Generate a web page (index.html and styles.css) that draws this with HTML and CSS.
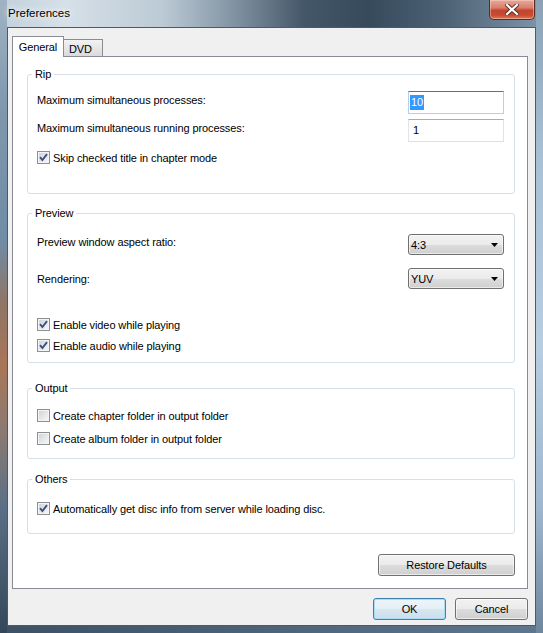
FILE: index.html
```html
<!DOCTYPE html>
<html lang="en">
<head>
<meta charset="utf-8">
<title>Preferences</title>
<link rel="stylesheet" href="styles.css">
</head>
<body>
<div class="window">
  <div class="titlebar">
    <span class="title">Preferences</span>
    <button class="close" aria-label="Close">
      <svg width="14" height="11" viewBox="0 0 14 11">
        <path d="M2 1 L12 10 M12 1 L2 10" stroke="#5a2a20" stroke-width="4" stroke-linecap="square"/>
        <path d="M2 1 L12 10 M12 1 L2 10" stroke="#ffffff" stroke-width="2.2" stroke-linecap="square"/>
      </svg>
    </button>
  </div>
  <div class="client">
    <div class="tabs">
      <div class="tab tab-active">General</div>
      <div class="tab tab-inactive">DVD</div>
    </div>
    <div class="panel">
      <fieldset class="group">
        <legend>Rip</legend>
        <div class="group-body rip-body">
          <div class="field-row">
            <span class="field-label">Maximum simultaneous processes:</span>
            <div class="textbox textbox-focused"><span class="selection">10</span></div>
          </div>
          <div class="field-row field-row-2">
            <span class="field-label">Maximum simultaneous running processes:</span>
            <div class="textbox">1</div>
          </div>
          <div class="check-row rip-check">
            <span class="checkbox checked"><svg width="9" height="9" viewBox="0 0 9 9"><path d="M1 4.2 L3.4 7 L8 1.2" fill="none" stroke="#3c4f82" stroke-width="1.9"/></svg></span>
            <span>Skip checked title in chapter mode</span>
          </div>
        </div>
      </fieldset>

      <fieldset class="group group-preview">
        <legend>Preview</legend>
        <div class="group-body preview-body">
          <div class="field-row combo-row">
            <span class="field-label">Preview window aspect ratio:</span>
            <div class="combo"><span>4:3</span><svg width="7" height="4" viewBox="0 0 7 4"><path d="M0 0 H7 L3.5 4 Z" fill="#000"/></svg></div>
          </div>
          <div class="field-row combo-row combo-row-2">
            <span class="field-label label-low">Rendering:</span>
            <div class="combo"><span>YUV</span><svg width="7" height="4" viewBox="0 0 7 4"><path d="M0 0 H7 L3.5 4 Z" fill="#000"/></svg></div>
          </div>
          <div class="check-row preview-check-1">
            <span class="checkbox checked"><svg width="9" height="9" viewBox="0 0 9 9"><path d="M1 4.2 L3.4 7 L8 1.2" fill="none" stroke="#3c4f82" stroke-width="1.9"/></svg></span>
            <span>Enable video while playing</span>
          </div>
          <div class="check-row preview-check-2">
            <span class="checkbox checked"><svg width="9" height="9" viewBox="0 0 9 9"><path d="M1 4.2 L3.4 7 L8 1.2" fill="none" stroke="#3c4f82" stroke-width="1.9"/></svg></span>
            <span>Enable audio while playing</span>
          </div>
        </div>
      </fieldset>

      <fieldset class="group group-output">
        <legend>Output</legend>
        <div class="group-body output-body">
          <div class="check-row">
            <span class="checkbox"></span>
            <span>Create chapter folder in output folder</span>
          </div>
          <div class="check-row output-check-2">
            <span class="checkbox"></span>
            <span>Create album folder in output folder</span>
          </div>
        </div>
      </fieldset>

      <fieldset class="group group-others">
        <legend>Others</legend>
        <div class="group-body others-body">
          <div class="check-row">
            <span class="checkbox checked"><svg width="9" height="9" viewBox="0 0 9 9"><path d="M1 4.2 L3.4 7 L8 1.2" fill="none" stroke="#3c4f82" stroke-width="1.9"/></svg></span>
            <span>Automatically get disc info from server while loading disc.</span>
          </div>
        </div>
      </fieldset>

      <button class="btn btn-restore">Restore Defaults</button>
    </div>
    <div class="dialog-buttons">
      <button class="btn btn-default">OK</button>
      <button class="btn">Cancel</button>
    </div>
  </div>
</div>
</body>
</html>
```

FILE: styles.css
```css
* { box-sizing: border-box; }

html, body {
  margin: 0;
  padding: 0;
}

body {
  width: 543px;
  height: 633px;
  overflow: hidden;
  font-family: "Liberation Sans", Arial, sans-serif;
  font-size: 11px;
  letter-spacing: -0.1px;
  color: #000;
}

.window {
  width: 543px;
  height: 633px;
  display: flex;
  flex-direction: column;
  padding: 0 7px 7px 7px;
  background:
    linear-gradient(to bottom, #9fb3c4 0%, #7e97ad 18%, #6f8ca6 38%, #8f7566 48%, #a87659 58%, #8b7a72 68%, #5b7086 80%, #34475a 100%) left top / 7px 100% no-repeat,
    linear-gradient(to bottom, #8aa2b6 0%, #a9c1d5 25%, #b7cde0 55%, #9fb8ce 80%, #6e879e 100%) right top / 7px 100% no-repeat,
    linear-gradient(to right, #3e5163, #4d6378 50%, #5f778e) left bottom / 100% 7px no-repeat,
    linear-gradient(to right, #c2d0db 0%, #d6e0e8 12%, #bccad5 30%, #7d8f9f 44%, #445768 56%, #364a5c 68%, #4d6275 82%, #7f96aa 100%);
}

.titlebar {
  height: 27px;
  display: flex;
  align-items: center;
  justify-content: space-between;
}

.title {
  padding-left: 1px;
  padding-bottom: 1px;
  font-size: 11.5px;
  letter-spacing: 0;
  text-shadow: 0 0 6px #ffffff, 0 0 10px rgba(255,255,255,0.9);
}

.close {
  align-self: flex-start;
  width: 46px;
  height: 20px;
  margin-right: 1px;
  padding: 0;
  border: 1px solid #5b2c24;
  border-top: none;
  border-radius: 0 0 5px 5px;
  background: linear-gradient(to bottom, #e9a99b 0%, #d9806c 40%, #c2462e 55%, #c84a2f 80%, #de7a5a 100%);
  box-shadow: inset 0 0 0 1px rgba(255,220,210,0.45);
  display: flex;
  align-items: center;
  justify-content: center;
}

.client {
  flex: 1;
  display: flex;
  flex-direction: column;
  background: #f0f0f0;
  border: 1px solid #4a5a6a;
  padding: 8px 7px 0 4px;
}

.tabs {
  height: 21px;
  display: flex;
  align-items: flex-end;
  margin-bottom: -1px;
  position: relative;
  z-index: 1;
}

.tab {
  border: 1px solid #898c95;
  border-bottom: none;
  white-space: nowrap;
}

.tab-active {
  width: 52px;
  height: 21px;
  background: #ffffff;
  text-align: center;
  line-height: 19px;
  padding-top: 1px;
}

.tab-inactive {
  width: 40px;
  height: 18px;
  margin-left: -1px;
  padding-left: 5px;
  line-height: 18px;
  background: linear-gradient(to bottom, #f2f2f2, #e6e6e6 50%, #dadada 100%);
  border-bottom: 1px solid #898c95;
}

.panel {
  height: 533px;
  background: #ffffff;
  border: 1px solid #898c95;
  display: flex;
  flex-direction: column;
  padding: 9px 12px 0 14px;
}

.group {
  margin: 0;
  padding: 0;
  min-width: 0;
  border: 1px solid #d5dfe5;
  border-radius: 3px;
}

.group legend {
  margin-left: 4px;
  padding: 0 3px;
  line-height: 16px;
  height: 16px;
}

.group-preview { margin-top: 11px; }
.group-output { margin-top: 17px; }
.group-others { margin-top: 12px; }

.group-body {
  display: flex;
  flex-direction: column;
  padding-left: 9px;
  padding-right: 10px;
}

.rip-body { padding-top: 9px; padding-bottom: 27px; }
.preview-body { padding-top: 13px; padding-bottom: 8px; }
.output-body { padding-top: 11px; padding-bottom: 11px; }
.others-body { padding-top: 13px; padding-bottom: 16px; }

.field-row {
  height: 23px;
  display: flex;
  align-items: center;
  justify-content: space-between;
}

.field-row-2 { margin-top: 5px; }

.combo-row { height: 21px; }
.combo-row-2 { margin-top: 13px; }

.field-label {
  margin-bottom: 5px;
}

.label-low {
  margin-bottom: 0;
}

.textbox {
  width: 96px;
  height: 23px;
  border: 1px solid #dbdfe6;
  border-top-color: #abadb3;
  border-left-color: #e2e3ea;
  border-right-color: #e2e3ea;
  background: #ffffff;
  padding-left: 4px;
  line-height: 21px;
}

.textbox-focused {
  border-color: #b5cfe7;
  border-top-color: #3d7bad;
  padding-left: 1px;
}

.selection {
  background: #3399ff;
  color: #ffffff;
  padding: 1px 1px 2px 1px;
}

.combo {
  width: 96px;
  height: 21px;
  border: 1px solid #707070;
  border-radius: 3px;
  background: linear-gradient(to bottom, #f2f2f2 0%, #ebebeb 50%, #dddddd 50%, #cfcfcf 100%);
  box-shadow: inset 0 0 0 1px rgba(255,255,255,0.55);
  display: flex;
  align-items: center;
  justify-content: space-between;
  padding: 0 5px 0 2px;
}

.check-row {
  height: 17px;
  display: flex;
  align-items: center;
  gap: 3px;
  white-space: nowrap;
}

.rip-check { margin-top: 7px; }
.preview-check-1 { margin-top: 27px; }
.preview-check-2 { margin-top: 4px; }
.output-check-2 { margin-top: 6px; }

.checkbox {
  width: 13px;
  height: 13px;
  flex: none;
  border: 1px solid #8e8f8f;
  background: linear-gradient(135deg, #cdd1d6 0%, #e6e8ea 55%, #f7f7f7 100%);
  box-shadow: inset 0 0 0 1px #f4f4f4;
  display: flex;
  align-items: center;
  justify-content: center;
}

.btn {
  height: 22px;
  padding: 0;
  font-family: "Liberation Sans", Arial, sans-serif;
  font-size: 11px;
  letter-spacing: -0.1px;
  color: #000;
  border: 1px solid #707070;
  border-radius: 3px;
  background: linear-gradient(to bottom, #f2f2f2 0%, #ebebeb 50%, #dddddd 50%, #cfcfcf 100%);
  box-shadow: inset 0 0 0 1px rgba(255,255,255,0.6);
}

.btn-restore {
  align-self: flex-end;
  width: 137px;
  margin-top: 20px;
}

.dialog-buttons {
  display: flex;
  justify-content: flex-end;
  gap: 9px;
  margin-top: 9px;
}

.dialog-buttons .btn {
  width: 73px;
}

.btn-default {
  border-color: #3c7fb1;
  background: linear-gradient(to bottom, #eef5f9 0%, #e4eff5 50%, #d6e6ef 50%, #cbdfea 100%);
  box-shadow: inset 0 0 0 1px #a9dcf5;
}
```
